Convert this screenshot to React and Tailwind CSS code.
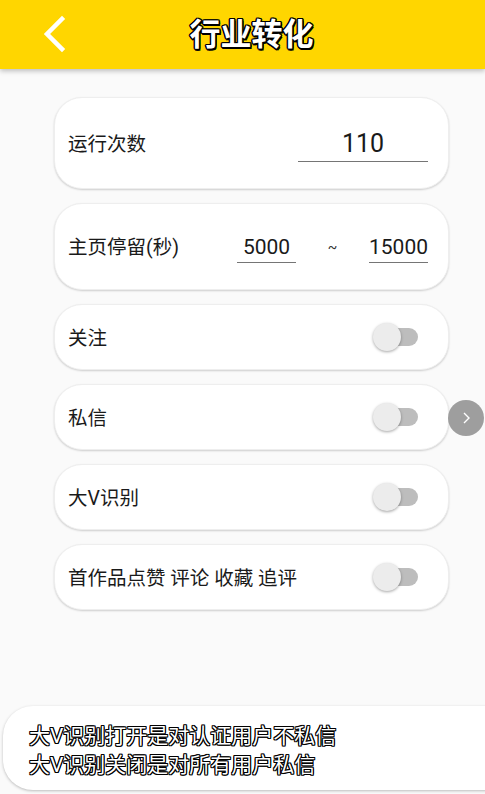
import React from 'react';

const font = { fontFamily: 'Roboto, "Noto Sans CJK SC", sans-serif' };

function Toggle() {
    return (
        <div className="relative w-[46px] h-[28px] shrink-0">
            <div className="absolute left-[9px] top-[5px] w-[36px] h-[18px] rounded-full bg-[#bdbdbd]" />
            <div className="absolute left-0 top-0 w-[28px] h-[28px] rounded-full bg-[#ececec] shadow-[0_1px_3px_rgba(0,0,0,0.35)]" />
        </div>
    );
}

function Card({ className = '', children }) {
    return (
        <div className={`flex items-center bg-white rounded-[28px] border border-[#eeeeee] shadow-[0_1px_2px_rgba(0,0,0,0.18)] pl-[13px] pr-[29px] ${className}`}>
            {children}
        </div>
    );
}

function ToggleRow({ label }) {
    return (
        <Card className="h-[66px] justify-between">
            <span className="text-[19.5px] text-[#1a1a1a] mt-[3px]">{label}</span>
            <Toggle />
        </Card>
    );
}

export default function App() {
    const outline =
        '[text-shadow:1.5px_0_0_#000,-1.5px_0_0_#000,0_1.5px_0_#000,0_-1.5px_0_#000,1px_1px_0_#000,-1px_-1px_0_#000,1px_-1px_0_#000,-1px_1px_0_#000,1.5px_1.5px_0_#000]';
    const thin =
        '[text-shadow:1px_0_0_#000,-1px_0_0_#000,0_1px_0_#000,0_-1px_0_#000,1px_1px_0_#000,-1px_-1px_0_#000,1px_-1px_0_#000,-1px_1px_0_#000]';

    return (
        <div className="relative w-[485px] h-[794px] overflow-hidden bg-[#fafafa] flex flex-col" style={font}>
            <header className="relative z-10 h-[69px] bg-[#ffd600] shadow-[0_2px_5px_rgba(0,0,0,0.25)] flex items-center justify-center pl-[18px] shrink-0">
                <svg className="absolute left-[40px] top-[14px]" width="30" height="40" viewBox="0 0 30 40">
                    <path d="M22 5 L7 20 L22 35" fill="none" stroke="#fff" strokeWidth="4.5" strokeLinecap="square" />
                </svg>
                <h1 className={`text-[31px] font-bold text-white leading-none ${outline}`}>行业转化</h1>
            </header>

            <main className="flex flex-col gap-[14px] pt-[28px] pl-[54px] pr-[36px]">
                <Card className="h-[92px] justify-between">
                    <span className="text-[19.5px] text-[#1a1a1a] mt-[3px]">运行次数</span>
                    <div className="w-[130px] mr-[-9px] mt-[2px] border-b-[1.5px] border-[#757575] text-center text-[25px] text-[#1a1a1a] leading-[34px]">110</div>
                </Card>
                <Card className="h-[87px] justify-between">
                    <span className="text-[19.5px] text-[#1a1a1a] mt-[3px]">主页停留(秒)</span>
                    <div className="flex items-center mr-[-9px] mt-[2px]">
                        <div className="w-[59px] border-b-[1.5px] border-[#757575] text-center text-[21px] text-[#1a1a1a] leading-[30px]">5000</div>
                        <span className="w-[73px] text-center text-[14px] text-[#333]">~</span>
                        <div className="w-[59px] border-b-[1.5px] border-[#757575] text-center text-[21px] text-[#1a1a1a] leading-[30px]">15000</div>
                    </div>
                </Card>
                <ToggleRow label="关注" />
                <ToggleRow label="私信" />
                <ToggleRow label="大V识别" />
                <ToggleRow label="首作品点赞 评论 收藏 追评" />
            </main>

            <div className="absolute left-[448px] top-[400px] w-[36px] h-[36px] rounded-full bg-[#9e9e9e] flex items-center justify-center">
                <svg width="14" height="14" viewBox="0 0 14 14">
                    <path d="M5 2 L10 7 L5 12" fill="none" stroke="#fff" strokeWidth="1.4" />
                </svg>
            </div>

            <div className="mt-auto mb-[4px] ml-[3px] mr-[-30px] h-[84px] bg-white rounded-l-[30px] shadow-[0_1px_3px_rgba(0,0,0,0.25)] flex flex-col justify-center pl-[26px] pt-[5px]">
                <p className={`text-[21px] leading-[29px] text-white ${thin}`}>大V识别打开是对认证用户不私信</p>
                <p className={`text-[21px] leading-[29px] text-white ${thin}`}>大V识别关闭是对所有用户私信</p>
            </div>
        </div>
    );
}
